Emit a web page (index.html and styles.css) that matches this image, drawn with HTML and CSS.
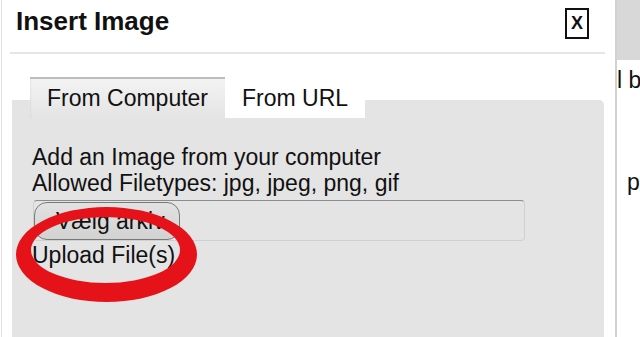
FILE: index.html
```html
<!DOCTYPE html>
<html lang="en">
<head>
<meta charset="utf-8">
<title>Insert Image</title>
<link rel="stylesheet" href="styles.css">
</head>
<body>
<div class="screen">
  <div class="dialog">
    <div class="dlg-head">
      <h1 class="dlg-title">Insert Image</h1>
      <button class="dlg-close" type="button">X</button>
    </div>
    <div class="dlg-rule"></div>
    <div class="panel">
      <div class="tabnav">
        <div class="tab tab-active">From Computer</div>
        <div class="tab">From URL</div>
      </div>
      <div class="panel-body">
        <p class="line">Add an Image from your computer</p>
        <p class="line">Allowed Filetypes: jpg, jpeg, png, gif</p>
        <div class="file-field"><span class="file-btn">Vælg arkiv</span></div>
        <p class="line upload">Upload File(s)</p>
      </div>
    </div>
  </div>
  <div class="behind">
    <div class="behind-bar"></div>
    <p class="behind-line">l b</p>
    <p class="behind-line behind-second">p</p>
  </div>
  <svg class="annot" width="640" height="337" viewBox="0 0 640 337" aria-hidden="true">
    <path fill="#e5121a" fill-rule="evenodd" d="M16,254.5 a90.5,47.5 0 1,0 181,0 a90.5,47.5 0 1,0 -181,0 Z M31,250 a74.5,33 0 1,0 149,0 a74.5,33 0 1,0 -149,0 Z"/>
  </svg>
</div>
</body>
</html>
```
FILE: styles.css
```css
html, body {
  margin: 0;
  padding: 0;
  background: #fff;
}
body {
  width: 640px;
  height: 337px;
  overflow: hidden;
  font-family: "Liberation Sans", Arial, Helvetica, sans-serif;
  color: #111;
}
.screen {
  position: relative;
  display: flex;
  width: 640px;
  height: 337px;
  overflow: hidden;
}
.dialog {
  margin-left: 1px;
  width: 613px;
  flex: none;
  border-left: 1px solid #e2e2e2;
  border-right: 2px solid #d2d2d2;
  display: flex;
  flex-direction: column;
  height: 337px;
  background: #fff;
}
.dlg-head {
  display: flex;
  justify-content: space-between;
  align-items: flex-start;
  height: 52px;
  box-sizing: border-box;
  padding: 6px 26px 0 14px;
}
.dlg-title {
  margin: 0;
  font-size: 26px;
  line-height: 30px;
  font-weight: bold;
  color: #111;
}
.dlg-close {
  margin-top: 2px;
  width: 24px;
  height: 31px;
  box-sizing: border-box;
  border: 2px solid #111;
  background: #fff;
  padding: 0;
  font-family: "Liberation Sans", Arial, sans-serif;
  font-weight: bold;
  font-size: 18px;
  line-height: 27px;
  color: #111;
  border-radius: 0;
}
.dlg-rule {
  height: 2px;
  margin: 0 10px 0 8px;
  background: #e6e6e6;
  flex: none;
}
.panel {
  flex: 1;
  margin: 46px 11px 0 10px;
  background: #e4e4e4;
  border-radius: 0 5px 0 0;
}
.tabnav {
  display: flex;
  margin-top: -23px;
  padding-left: 18px;
}
.tab {
  height: 39px;
  line-height: 39px;
  padding: 0 17px;
  font-size: 23px;
  border-top: 2px solid transparent;
  background: #fff;
  white-space: nowrap;
}
.tab-active {
  border-top-color: #bdbdbd;
  background: linear-gradient(#f3f3f3, #e4e4e4);
  box-shadow: inset 2px 0 2px -1px rgba(0, 0, 0, 0.05);
}
.panel-body {
  padding: 26px 20px 0;
}
.line {
  margin: 0;
  font-size: 23px;
  line-height: 26px;
  white-space: nowrap;
}
.file-field {
  margin: 4px 0 0 1px;
  width: 492px;
  height: 41px;
  box-sizing: border-box;
  padding-top: 1px;
  border: 1px solid #d0d0d0;
  border-top-color: #8c8c8c;
  border-radius: 4px;
  display: flex;
}
.file-btn {
  display: block;
  width: 146px;
  height: 38px;
  box-sizing: border-box;
  border: 1px solid #787878;
  border-radius: 13px;
  background: linear-gradient(#e2e2e2, #d2d2d2);
  padding-left: 21px;
  font-size: 23px;
  line-height: 36px;
  white-space: nowrap;
  overflow: hidden;
  color: #111;
}
.upload {
  margin-top: 1px;
}
.behind {
  flex: 1;
  overflow: hidden;
  white-space: nowrap;
}
.behind-bar {
  height: 60px;
  background: #d8d8d8;
}
.behind-line {
  margin: 7px 0 0;
  font-size: 23px;
  line-height: 26px;
}
.behind-second {
  margin-top: 76px;
  padding-left: 10px;
}
.annot {
  position: absolute;
  left: 0;
  top: 0;
  pointer-events: none;
}
```
